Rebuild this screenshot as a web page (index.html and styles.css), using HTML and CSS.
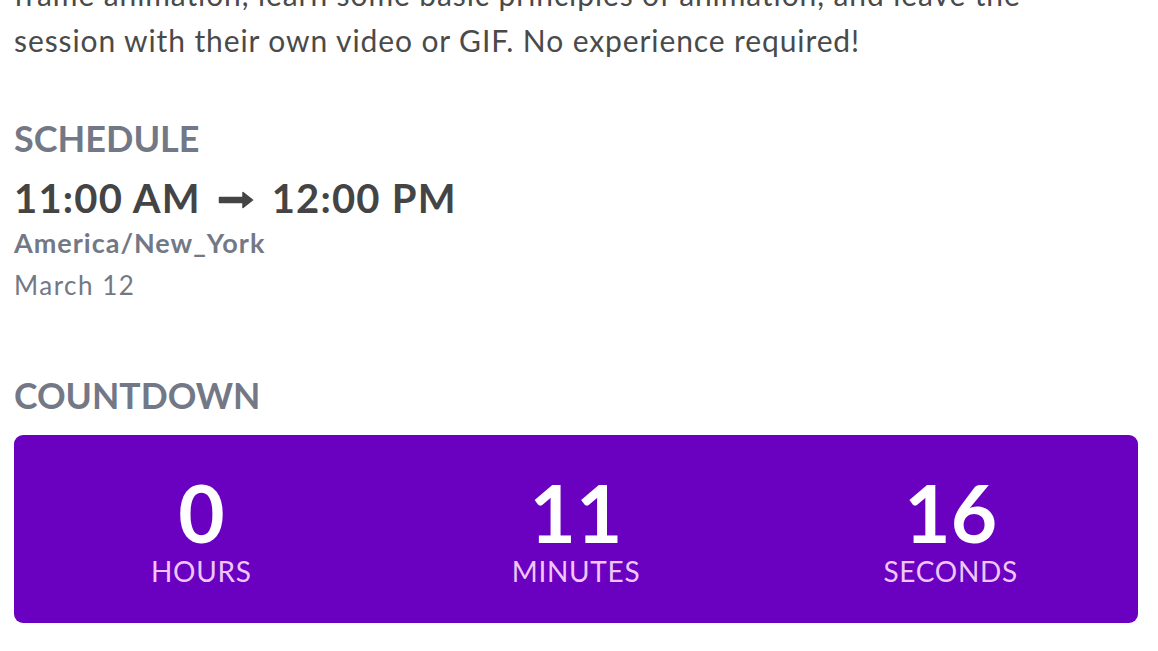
FILE: index.html
```html
<!DOCTYPE html>
<html lang="en">
<head>
<meta charset="utf-8">
<title>Session</title>
<link rel="stylesheet" href="styles.css">
</head>
<body>
<main class="page">
  <p class="desc">frame animation, learn some basic principles of animation, and leave the session with their own video or GIF. No experience required!</p>

  <section class="schedule">
    <h2 class="label">SCHEDULE</h2>
    <div class="time"><span>11:00 AM</span><svg class="arrow" viewBox="0 0 36 18" aria-hidden="true"><path d="M1.5 6.5H25V1.5L34.5 9L25 16.5V11.5H1.5Z" fill="#444" stroke="#444" stroke-width="1.5" stroke-linejoin="round"/></svg><span>12:00 PM</span></div>
    <div class="tz">America/New_York</div>
    <div class="date">March 12</div>
  </section>

  <section class="countdown">
    <h2 class="label label-cd">COUNTDOWN</h2>
    <div class="cd-box">
      <div class="cd-unit"><span class="cd-num">0</span><span class="cd-name">HOURS</span></div>
      <div class="cd-unit"><span class="cd-num">11</span><span class="cd-name">MINUTES</span></div>
      <div class="cd-unit"><span class="cd-num">16</span><span class="cd-name">SECONDS</span></div>
    </div>
  </section>
</main>
</body>
</html>
```

FILE: styles.css
```css
html, body {
  margin: 0;
  padding: 0;
  background: #fff;
}
body {
  font-family: "Lato", "Noto Sans", sans-serif;
  color: #4a4a4a;
  overflow: hidden;
}
.page {
  padding: 0 20px 0 14px;
}
.desc {
  margin: -29px 0 0;
  font-size: 30px;
  line-height: 46px;
  letter-spacing: 0.9px;
  color: #4a4a4a;
  max-width: 1100px;
}
.label {
  margin: 0;
  font-size: 36px;
  font-weight: 700;
  color: #737886;
  line-height: 44px;
}
.label-cd {
  font-size: 35.5px;
}
.schedule {
  margin-top: 53px;
}
.time {
  margin-top: 14px;
  font-size: 40px;
  font-weight: 700;
  letter-spacing: 1.2px;
  color: #444;
  line-height: 48px;
  display: flex;
  align-items: center;
}
.arrow {
  width: 36px;
  height: 18px;
  margin: 4px 18px 0 17px;
}
.tz {
  margin-top: 4px;
  font-size: 27px;
  font-weight: 700;
  letter-spacing: 1px;
  color: #737886;
  line-height: 34px;
}
.date {
  margin-top: 5px;
  font-size: 26px;
  letter-spacing: 1.5px;
  color: #737886;
  line-height: 40px;
}
.countdown {
  margin-top: 69px;
}
.cd-box {
  margin-top: 17px;
  background: #6a00c0;
  border-radius: 9px;
  padding: 33px 0 37px;
  display: grid;
  grid-template-columns: repeat(3, 1fr);
  align-items: start;
}
.cd-unit {
  display: flex;
  flex-direction: column;
  align-items: center;
}
.cd-num {
  font-size: 80px;
  font-weight: 700;
  color: #fff;
  line-height: 88px;
}
.cd-name {
  font-size: 28px;
  letter-spacing: 0.7px;
  color: #efc6f7;
  line-height: 30px;
}
```
